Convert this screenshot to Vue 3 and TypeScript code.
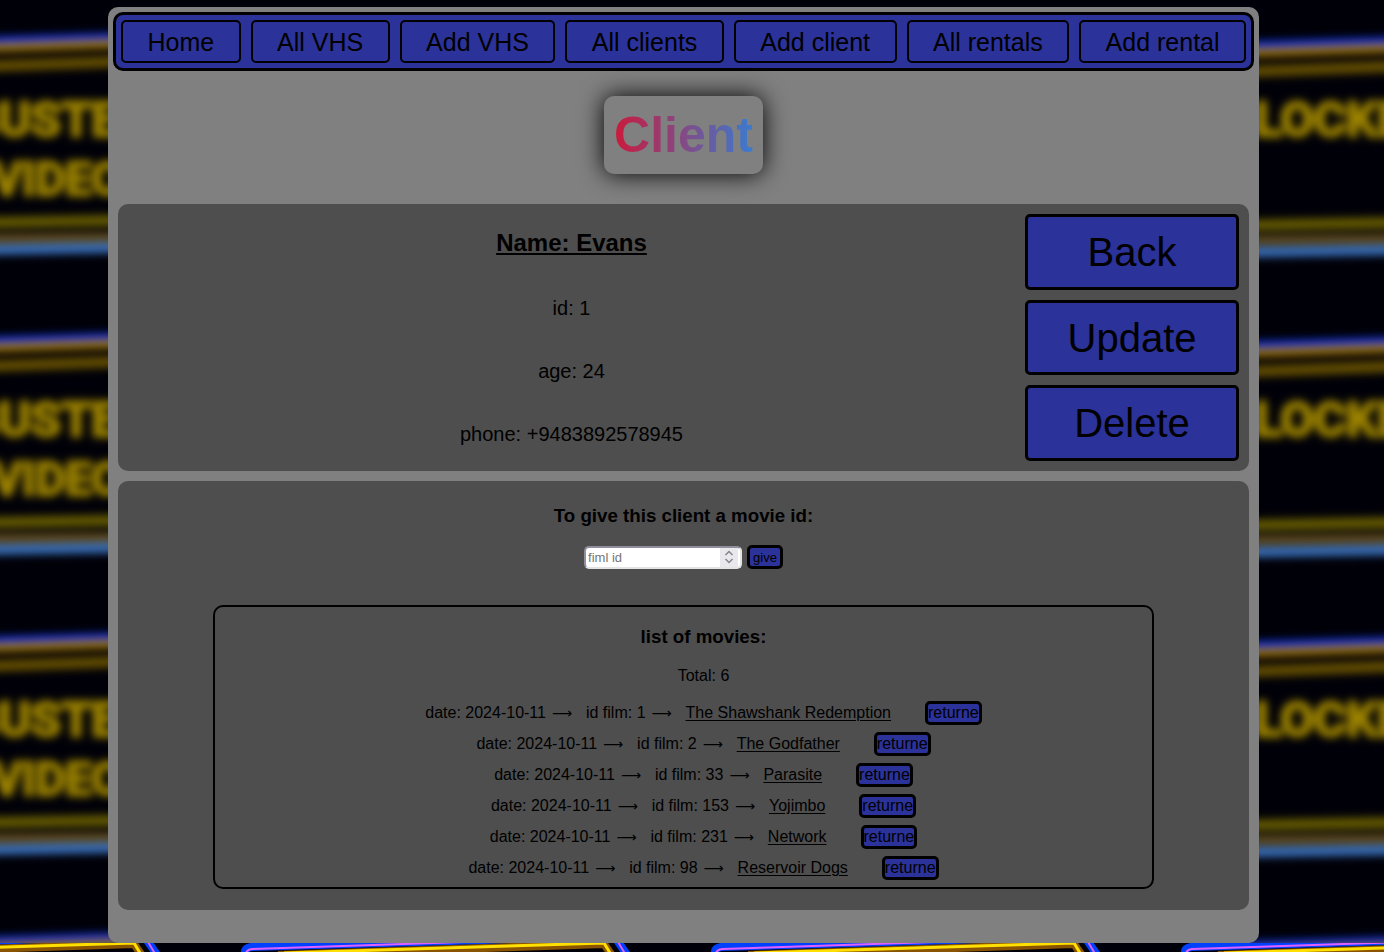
<script setup lang="ts">
import { ref } from 'vue'

interface Rental {
  date: string
  filmId: number
  title: string
}

const navItems: string[] = [
  'Home',
  'All VHS',
  'Add VHS',
  'All clients',
  'Add client',
  'All rentals',
  'Add rental',
]

const client = { id: 1, name: 'Evans', age: 24, phone: '+9483892578945' }

const actions: string[] = ['Back', 'Update', 'Delete']

const rentals = ref<Rental[]>([
  { date: '2024-10-11', filmId: 1, title: 'The Shawshank Redemption' },
  { date: '2024-10-11', filmId: 2, title: 'The Godfather' },
  { date: '2024-10-11', filmId: 33, title: 'Parasite' },
  { date: '2024-10-11', filmId: 153, title: 'Yojimbo' },
  { date: '2024-10-11', filmId: 231, title: 'Network' },
  { date: '2024-10-11', filmId: 98, title: 'Reservoir Dogs' },
])

const filmId = ref<string>('')
</script>

<template>
  <div class="page">
    <!-- Repeating neon sign wallpaper -->
    <svg class="wallpaper" aria-hidden="true">
      <defs>
        <pattern id="neon" x="232" y="0" width="470" height="300" patternUnits="userSpaceOnUse">
          <rect width="470" height="300" fill="#00000a" />
          <g transform="translate(10 0)" fill="none" stroke-linejoin="round">
            <path d="M3 60 L3 52 Q3 48 9 47 L372 36 L390 62 L384 247 L4 253 Z" stroke="#0040ff" stroke-width="8" />
            <path d="M4 60 L4 54 Q4 50 10 49 L373 37 L388 62 L382 247 L5 252 Z" stroke="#e060ff" stroke-width="2" />
            <path d="M36 55 L362 44 L378 67" stroke="#8a5400" stroke-width="8" />
            <path d="M42 53 L362 43 L376 66" stroke="#ffe000" stroke-width="3" />
            <path d="M24 73 L362 61" stroke="#806400" stroke-width="11" />
            <path d="M20 226 L366 220" stroke="#807200" stroke-width="11" />
            <path d="M16 241 L372 237" stroke="#806428" stroke-width="9" />
            <path d="M10 253 L382 247" stroke="#4a90f0" stroke-width="10" />
          </g>
          <g transform="translate(10 0)" class="sign">
            <text x="42" y="136" font-size="49">BLOCKBUSTER</text>
            <text x="220" y="195" font-size="46">VIDEO</text>
          </g>
        </pattern>
      </defs>
      <rect width="100%" height="100%" fill="url(#neon)" />
    </svg>

    <div class="veil">
      <svg class="wallpaper" aria-hidden="true">
        <rect class="haze" x="-40" y="-40" width="110%" height="110%" fill="url(#neon)" />
      </svg>
      <main class="shell">
        <nav class="nav">
          <button v-for="item in navItems" :key="item" type="button">{{ item }}</button>
        </nav>

        <h1 class="title"><span>Client</span></h1>

        <section class="card client">
          <div class="info">
            <h2>Name: {{ client.name }}</h2>
            <p>id: {{ client.id }}</p>
            <p>age: {{ client.age }}</p>
            <p>phone: {{ client.phone }}</p>
          </div>
          <div class="actions">
            <button v-for="action in actions" :key="action" type="button">{{ action }}</button>
          </div>
        </section>

        <section class="card lending">
          <h3>To give this client a movie id:</h3>
          <form class="give" @submit.prevent>
            <div class="field">
              <input v-model="filmId" type="number" placeholder="fiml id" aria-label="Film id" />
              <span class="spinner" aria-hidden="true">
                <svg width="10" height="14" viewBox="0 0 10 14">
                  <path d="M1.5 5 L5 1.5 L8.5 5 M1.5 9 L5 12.5 L8.5 9" fill="none" stroke="#85858d" stroke-width="1.5" />
                </svg>
              </span>
            </div>
            <button type="submit">give</button>
          </form>

          <div class="movies">
            <h3>list of movies:</h3>
            <p>Total: {{ rentals.length }}</p>
            <ul>
              <li v-for="rental in rentals" :key="rental.filmId">
                <span>date: {{ rental.date }}</span>
                <span class="arrow">⟶</span>
                <span>id film: {{ rental.filmId }}</span>
                <span class="arrow">⟶</span>
                <a href="#">{{ rental.title }}</a>
                <button type="button">returne</button>
              </li>
            </ul>
          </div>
        </section>
      </main>
    </div>
  </div>
</template>

<style>
body {
  margin: 0;
  background: #00000a;
}
</style>

<style scoped>
.page {
  position: relative;
  min-height: 100vh;
  font-family: "Liberation Sans", Arial, sans-serif;
  font-size: 16px;
  color: #000;
}

.wallpaper {
  position: absolute;
  inset: 0;
  width: 100%;
  height: 100%;
  overflow: hidden;
}

.haze {
  filter: blur(4px) brightness(80%);
}

.sign {
  font-family: Roboto, "Liberation Sans", sans-serif;
  font-weight: 700;
  fill: #c4a400;
  stroke: #c4a400;
  stroke-width: 3px;
}

.veil {
  position: relative;
  padding: 7px 125px 0 108px;
}

.shell {
  position: relative;
  box-sizing: border-box;
  padding: 5px 5px 33px;
  border-radius: 10px;
  background: #808080;
}

button {
  margin: 0;
  font-family: inherit;
  color: #000;
  background: #2b3299;
  border: 3px solid #000;
  border-radius: 5px;
  cursor: pointer;
}

h1,
h2,
h3,
p,
ul {
  margin: 0;
}

.nav {
  display: flex;
  gap: 10px;
  padding: 5px;
  border: 3px solid #000;
  border-radius: 10px;
  background: #2b3299;
}

.nav button {
  flex: 1 1 auto;
  padding: 6px 20px 4px;
  border-width: 2px;
  font-size: 25px;
  line-height: 29px;
  white-space: nowrap;
}

.title {
  width: fit-content;
  margin: 25px auto 30px;
  padding: 10px;
  border-radius: 10px;
  box-shadow: 0 0 25px #000;
  font-size: 50px;
  line-height: 58px;
}

.title span {
  display: block;
  background: linear-gradient(to right, #cb1a3c, #3a7bd0);
  background-clip: text;
  -webkit-background-clip: text;
  color: transparent;
}

.card {
  margin: 0 5px;
  border-radius: 10px;
  background: #4e4e4e;
}

.client {
  display: flex;
  padding: 10px 10px 10px 0;
}

.info {
  flex: 1;
  display: flex;
  flex-direction: column;
  gap: 40px;
  padding: 15px 0;
  text-align: center;
}

.info h2 {
  font-size: 24px;
  line-height: 28px;
  text-decoration: underline;
}

.info p {
  font-size: 20px;
  line-height: 23px;
}

.actions {
  display: flex;
  flex-direction: column;
  gap: 10px;
  width: 214px;
}

.actions button {
  flex: 1;
  padding: 10px;
  font-size: 40px;
  line-height: 46px;
}

.lending {
  margin-top: 10px;
  padding: 24px 95px 21px;
}

.lending h3 {
  line-height: 21px;
  text-align: center;
}

.give {
  display: flex;
  justify-content: center;
  align-items: center;
  gap: 5px;
  margin: 19px 0 36px;
}

.field {
  position: relative;
  display: flex;
}

.field input {
  box-sizing: border-box;
  width: 158px;
  height: 23px;
  padding: 0 24px 0 2px;
  border: 2px solid;
  border-color: #8f8f9d #e3e3e3 #e3e3e3 #8f8f9d;
  border-radius: 5px;
  background: #fff;
  font-family: inherit;
  font-size: 13px;
  appearance: textfield;
  -moz-appearance: textfield;
}

.field input::-webkit-inner-spin-button {
  appearance: none;
  -webkit-appearance: none;
}

.field input::placeholder {
  color: #757575;
}

.spinner {
  position: absolute;
  top: 2px;
  right: 4px;
  bottom: 2px;
  display: flex;
  align-items: center;
  justify-content: center;
  width: 18px;
  background: #e9e9ed;
  pointer-events: none;
}

.give button {
  height: 24px;
  padding: 1px 3px 0;
  font-size: 13px;
}

.movies {
  padding: 19px 0 7px 40px;
  border: 2px solid #000;
  border-radius: 10px;
}

.movies p {
  margin: 20px 0 16px;
  line-height: 18px;
  text-align: center;
}

.movies ul {
  display: flex;
  flex-direction: column;
  gap: 7px;
  padding: 0;
  list-style: none;
}

.movies li {
  display: flex;
  justify-content: center;
  align-items: center;
  line-height: 18px;
}

.movies a {
  margin-right: 34px;
  color: inherit;
  text-decoration: underline;
  text-underline-offset: 2px;
}

.movies li button {
  padding: 0;
  font-size: 16px;
  line-height: 18px;
}

.arrow {
  box-sizing: border-box;
  width: 40px;
  padding-left: 6px;
  font-family: "DejaVu Sans", sans-serif;
  font-size: 14px;
}
</style>
